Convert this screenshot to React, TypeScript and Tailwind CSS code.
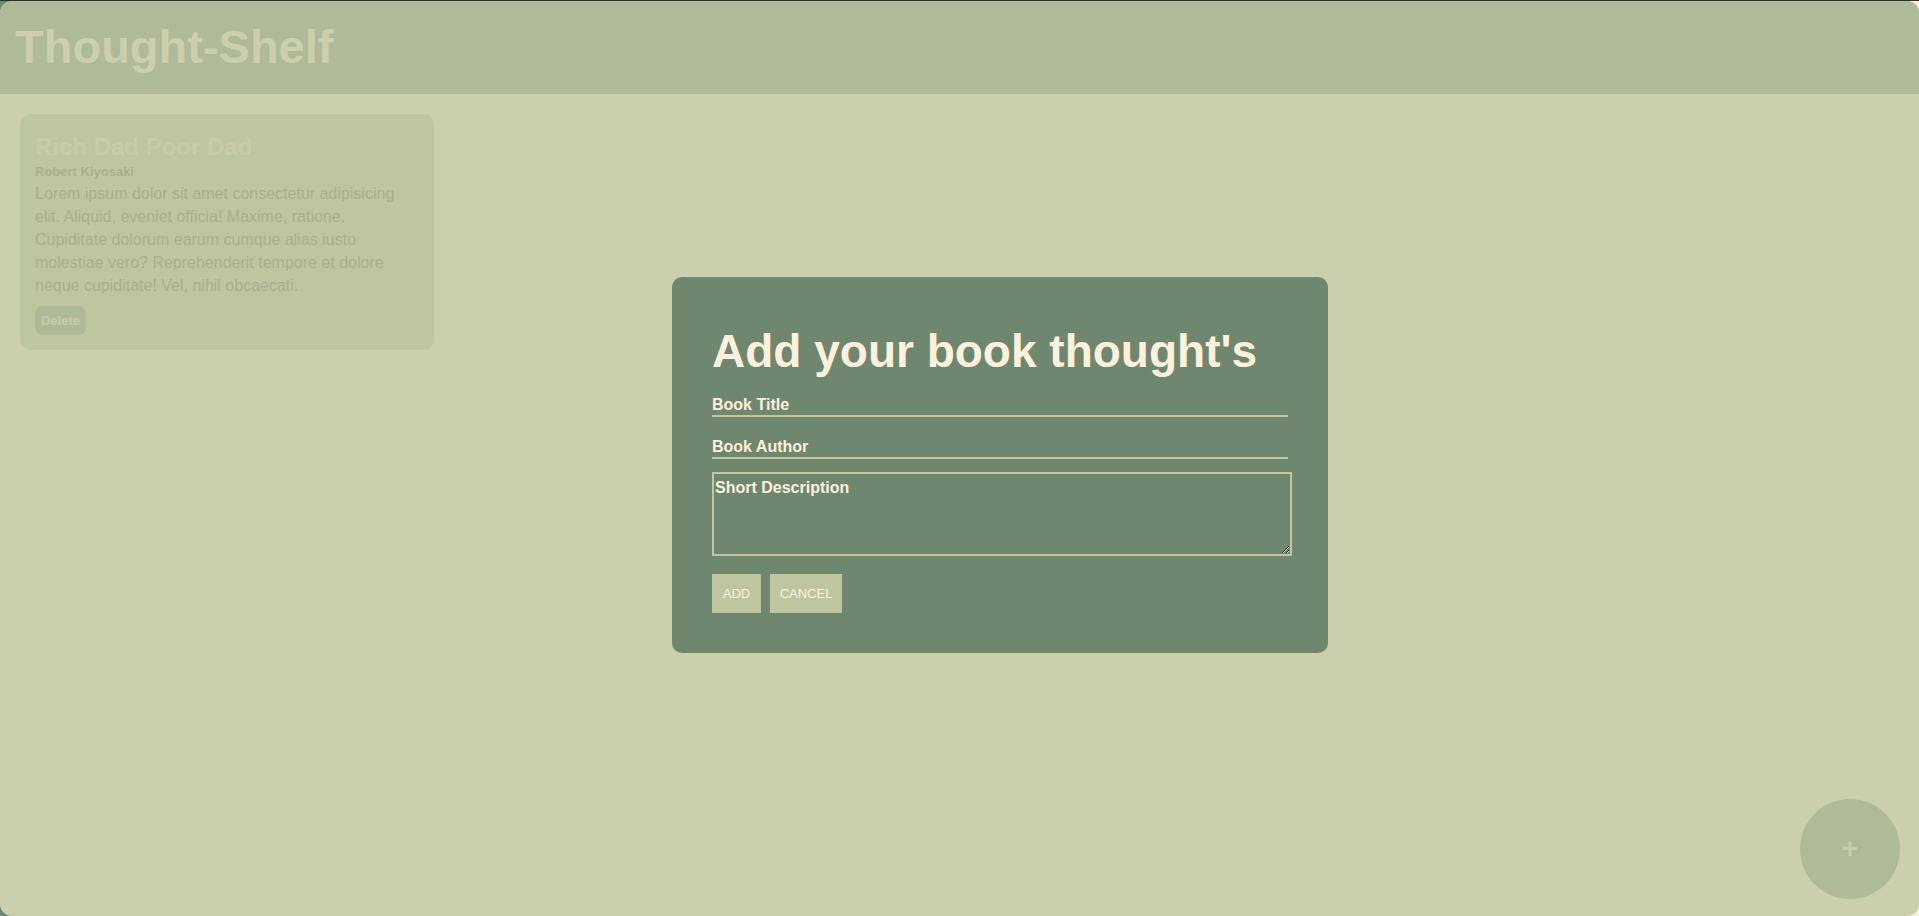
import React from "react";

const font = { fontFamily: '"Comic Sans MS", "Liberation Sans", sans-serif' };

const books = [
  {
    title: "Rich Dad Poor Dad",
    author: "Robert Kiyosaki",
    text: "Lorem ipsum dolor sit amet consectetur adipisicing elit. Aliquid, eveniet officia! Maxime, ratione. Cupiditate dolorum earum cumque alias iusto molestiae vero? Reprehenderit tempore et dolore neque cupiditate! Vel, nihil obcaecati.",
  },
];

const BookCard = ({ title, author, text }: { title: string; author: string; text: string }) => (
  <div className="w-[414px] rounded-[10px] bg-[#bec69f] px-[15px] pt-[18px] pb-[15px]">
    <h2 className="text-[24px] font-bold leading-[30px] text-[#c8cca6]">{title}</h2>
    <h4 className="mt-[2px] text-[13px] font-bold leading-[16px] text-[#a9b08f]">{author}</h4>
    <p className="mt-[2px] text-[16px] leading-[23px] text-[#a8af8e]">{text}</p>
    <button className="mt-[9px] h-[29px] w-[51px] rounded-[8px] bg-[#adb997] text-[13px] font-bold text-[#c8cca6]">
      Delete
    </button>
  </div>
);

const AddModal = () => (
  <div className="absolute left-[672px] top-[276px] w-[656px] rounded-[10px] bg-[#6f876f] px-[40px] pt-[48px] pb-[40px] text-[#fdf0dc]">
    <h1 className="text-[46px] font-bold leading-[52px]">Add your book thought's</h1>
    <form className="mt-[14px] flex flex-col">
      <input
        placeholder="Book Title"
        className="h-[26px] w-[576px] border-b-2 border-[#c2c7a0] bg-transparent pt-[4px] text-[16px] font-bold outline-none placeholder:text-[#fdf0dc]"
        style={font}
      />
      <input
        placeholder="Book Author"
        className="mt-[16px] h-[26px] w-[576px] border-b-2 border-[#c2c7a0] bg-transparent pt-[4px] text-[16px] font-bold outline-none placeholder:text-[#fdf0dc]"
        style={font}
      />
      <textarea
        placeholder="Short Description"
        className="mt-[13px] h-[84px] w-[580px] border-2 border-[#c2c7a0] bg-transparent px-px py-[4px] text-[16px] font-bold leading-[20px] outline-none placeholder:text-[#fdf0dc]"
        style={font}
      />
      <div className="mt-[18px] flex gap-[9px]">
        <button type="button" className="h-[39px] w-[49px] bg-[#bec69f] text-[13px] text-[#fdf0dc]">
          ADD
        </button>
        <button type="button" className="h-[39px] w-[72px] bg-[#bec69f] text-[13px] text-[#fdf0dc]">
          CANCEL
        </button>
      </div>
    </form>
  </div>
);

export default function App() {
  return (
    <div className="h-[916px] w-full border-t border-[#2b3030] bg-[linear-gradient(135deg,#6f876f_50%,#f6efdc_50%)]" style={font}>
      <div className="relative h-[915px] overflow-hidden rounded-[12px] bg-[#cbcfae]">
        <header className="flex h-[93px] items-center bg-[#aeba98] px-[15px]">
          <h1 className="text-[47px] font-bold text-[#cbcfad]">Thought-Shelf</h1>
        </header>
        <main className="p-[20px]">
          {books.map((b) => (
            <BookCard key={b.title} {...b} />
          ))}
        </main>
        <AddModal />
        <button className="absolute right-[19px] bottom-[17px] flex h-[100px] w-[100px] items-center justify-center rounded-full bg-[#aeba98] text-[28px] font-bold text-[#c8cca9]">
          +
        </button>
      </div>
    </div>
  );
}
